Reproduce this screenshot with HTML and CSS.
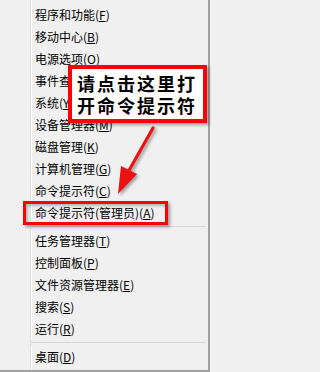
FILE: index.html
```html
<!DOCTYPE html>
<html lang="zh">
<head>
<meta charset="utf-8">
<link rel="stylesheet" href="styles.css">
</head>
<body>
<div class="menu">
  <ul class="list">
    <li class="item">程序和功能(<u>F</u>)</li>
    <li class="item">移动中心(<u>B</u>)</li>
    <li class="item">电源选项(<u>O</u>)</li>
    <li class="item">事件查看器(<u>V</u>)</li>
    <li class="item">系统(<u>Y</u>)</li>
    <li class="item">设备管理器(<u>M</u>)</li>
    <li class="item">磁盘管理(<u>K</u>)</li>
    <li class="item">计算机管理(<u>G</u>)</li>
    <li class="item">命令提示符(<u>C</u>)</li>
    <li class="item">命令提示符(管理员)(<u>A</u>)</li>
    <li class="sep"></li>
    <li class="item">任务管理器(<u>T</u>)</li>
    <li class="item">控制面板(<u>P</u>)</li>
    <li class="item">文件资源管理器(<u>E</u>)</li>
    <li class="item">搜索(<u>S</u>)</li>
    <li class="item">运行(<u>R</u>)</li>
    <li class="sep"></li>
    <li class="item">桌面(<u>D</u>)</li>
  </ul>
  <div class="highlight"></div>
  <svg class="arrow" width="210" height="372" viewBox="0 0 210 372">
    <line x1="153" y1="128" x2="127" y2="174" stroke="#ee1111" stroke-width="3.2" stroke-linecap="round"/>
    <polygon points="118,194 121,166 137,174" fill="#ee1111"/>
  </svg>
  <div class="callout">
    <div class="callout-line">请点击这里打</div>
    <div class="callout-line">开命令提示符</div>
  </div>
</div>
</body>
</html>
```
FILE: styles.css
```css
html, body {
  margin: 0;
  padding: 0;
  background: #f0f0f0;
}
.menu {
  position: relative;
  width: 208px;
  height: 370px;
  border-right: 2px solid #a0a0a0;
  border-bottom: 2px solid #a0a0a0;
  background: #f0f0f0;
  padding-left: 30px;
  box-sizing: content-box;
  width: 178px;
  font-family: "Noto Sans CJK SC", "Noto Sans", sans-serif;
  font-size: 12px;
  color: #000;
}
.list {
  list-style: none;
  margin: 0;
  padding: 4px 0 0 0;
  height: 366px;
  border-left: 1px solid #e0e0e0;
  box-shadow: inset 1px 0 0 #ffffff;
}
.item {
  height: 22px;
  line-height: 22px;
  padding-left: 4px;
  white-space: nowrap;
}
.item u {
  text-decoration: underline;
  text-underline-offset: 1px;
}
.sep {
  height: 6px;
  margin-right: 2px;
  background: linear-gradient(#f0f0f0 0, #f0f0f0 2px, #d7d7d7 2px, #d7d7d7 3px, #f0f0f0 3px);
}
.highlight {
  position: absolute;
  left: 23px;
  top: 201px;
  width: 139px;
  height: 18px;
  border: 3px solid #ff0000;
  box-shadow: 2px 2px 3px rgba(0,0,0,0.35), inset 2px 2px 3px rgba(0,0,0,0.25);
}
.arrow {
  position: absolute;
  left: 0;
  top: 0;
  filter: drop-shadow(2px 2px 1.5px rgba(0,0,0,0.35));
}
.callout {
  position: absolute;
  left: 68px;
  top: 65px;
  width: 131px;
  height: 44px;
  padding: 3px 0 3px 5px;
  box-sizing: content-box;
  width: 126px;
  background: #ffffff;
  border: 4px solid #ff0000;
  box-shadow: 2px 2px 3px rgba(0,0,0,0.35);
  font-family: "Noto Sans CJK SC", sans-serif;
  font-weight: bold;
  font-size: 18px;
  letter-spacing: 2px;
  color: #000;
}
.callout-line {
  height: 22px;
  line-height: 22px;
  white-space: nowrap;
}
```
